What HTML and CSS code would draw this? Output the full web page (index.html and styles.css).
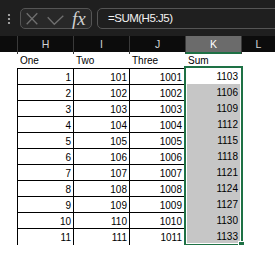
FILE: index.html
```html
<!DOCTYPE html>
<html lang="en">
  <head>
    <meta charset="UTF-8" />
    <meta name="viewport" content="width=device-width, initial-scale=1.0" />
    <title>Sum</title>
    <link rel="stylesheet" href="styles.css">
  </head>
  <body>
    <!-- Formula bar -->
    <div class="toolbar">
      <svg class="grip" width="4" height="12" viewBox="0 0 4 12">
        <circle cx="2" cy="2" r="1.1" />
        <circle cx="2" cy="6" r="1.1" />
        <circle cx="2" cy="10" r="1.1" />
      </svg>
      <div class="fbox">
        <svg class="marks" width="46" height="19" viewBox="0 0 46 19">
          <path d="M5.7 4.3 L16.3 15.3 M16.3 4.3 L5.7 15.3" />
          <path d="M26.7 8.3 L33.3 15.3 L42.3 6.7" />
        </svg>
        <span class="fx">fx</span>
      </div>
      <div class="formula">=SUM(H5:J5)</div>
    </div>

    <!-- Sheet -->
    <div class="sheet">
      <div class="heads">
        <div class="h"></div>
        <div class="h">H</div>
        <div class="h">I</div>
        <div class="h">J</div>
        <div class="h sel">K</div>
        <div class="h">L</div>
      </div>

      <div class="row labels">
        <div></div><div>One</div><div>Two</div><div>Three</div><div>Sum</div><div></div>
      </div>

      <div class="row data first">
        <div></div><div class="t">1</div><div class="t">101</div><div class="t last">1001</div><div class="k active">1103</div><div></div>
      </div>
      <div class="row data">
        <div></div><div class="t">2</div><div class="t">102</div><div class="t last">1002</div><div class="k">1106</div><div></div>
      </div>
      <div class="row data">
        <div></div><div class="t">3</div><div class="t">103</div><div class="t last">1003</div><div class="k">1109</div><div></div>
      </div>
      <div class="row data">
        <div></div><div class="t">4</div><div class="t">104</div><div class="t last">1004</div><div class="k">1112</div><div></div>
      </div>
      <div class="row data">
        <div></div><div class="t">5</div><div class="t">105</div><div class="t last">1005</div><div class="k">1115</div><div></div>
      </div>
      <div class="row data">
        <div></div><div class="t">6</div><div class="t">106</div><div class="t last">1006</div><div class="k">1118</div><div></div>
      </div>
      <div class="row data">
        <div></div><div class="t">7</div><div class="t">107</div><div class="t last">1007</div><div class="k">1121</div><div></div>
      </div>
      <div class="row data">
        <div></div><div class="t">8</div><div class="t">108</div><div class="t last">1008</div><div class="k">1124</div><div></div>
      </div>
      <div class="row data">
        <div></div><div class="t">9</div><div class="t">109</div><div class="t last">1009</div><div class="k">1127</div><div></div>
      </div>
      <div class="row data">
        <div></div><div class="t">10</div><div class="t">110</div><div class="t last">1010</div><div class="k">1130</div><div></div>
      </div>
      <div class="row data end">
        <div></div><div class="t">11</div><div class="t">111</div><div class="t last">1011</div><div class="k">1133</div><div></div>
      </div>

      <!-- selected range K4:K14 -->
      <div class="selection"><span class="handle"></span></div>
    </div>
  </body>
</html>
```

FILE: styles.css
```css
/* Page */
body {
  margin: 0;
  background-color: #fff;
  font-family: "Liberation Sans", Arial, sans-serif;
  overflow: hidden;
}

/* Formula bar */
.toolbar {
  display: flex;
  align-items: flex-start;
  height: 36px;
  padding-top: 8px;
  box-sizing: border-box;
  background-color: #1f1f1f;
  overflow: hidden;
}

.grip {
  margin: 5px 0 0 7px;
  fill: #bdbdbd;
}

.fbox {
  display: flex;
  align-items: center;
  width: 72px;
  height: 21px;
  margin-left: 9px;
  box-sizing: border-box;
  border: 1px solid #555;
  border-radius: 5px;
  background-color: #282828;
}

.marks path {
  fill: none;
  stroke: #6f6f6f;
  stroke-width: 1.3;
}

.fx {
  margin-left: 5px;
  font-family: "Liberation Serif", "Times New Roman", serif;
  font-style: italic;
  font-size: 19px;
  line-height: 19px;
  color: #d0d0d0;
}

.formula {
  flex: 1;
  height: 21px;
  margin: 0 -10px 0 5px;
  padding-left: 10px;
  box-sizing: border-box;
  border: 1px solid #555;
  border-radius: 5px;
  font-size: 11.5px;
  letter-spacing: -0.5px;
  line-height: 19px;
  color: #f2f2f2;
}

/* Sheet */
.sheet {
  position: relative;
}

.heads,
.row {
  display: grid;
  grid-template-columns: 17px 56px 56px 56px 56px 1fr;
}

.heads {
  height: 16px;
  background-color: #0c0c0c;
}

.h {
  box-sizing: border-box;
  border-left: 1px solid #3a3a3a;
  font-size: 10.5px;
  line-height: 16px;
  text-align: center;
  color: #d4d4d4;
}

.h:first-child {
  border-left: none;
}

.h.sel {
  background-color: #6b6b6b;
  border-bottom: 2px solid #1e7145;
  color: #fff;
}

.row {
  height: 16px;
  font-size: 10px;
  line-height: 17px;
  color: #000;
}

.labels div {
  padding-left: 3px;
}

.data .t {
  box-sizing: border-box;
  border-left: 1px solid #000;
  border-top: 1px solid #000;
  padding-right: 2px;
  text-align: right;
}

.data .t.last {
  border-right: 1px solid #000;
}

.data.end {
  height: 17px;
}

.data.end .t {
  border-bottom: 1px solid #000;
}

.k {
  padding-right: 3px;
  text-align: right;
  background-color: #c6c6c6;
}

.k.active {
  background-color: #fff;
}

/* Selection outline */
.selection {
  position: absolute;
  left: 184px;
  top: 30px;
  width: 59px;
  height: 180px;
  box-sizing: border-box;
  border: 2px solid #1e7145;
  box-shadow: inset 0 0 0 1px #fff;
}

.handle {
  position: absolute;
  right: -3px;
  bottom: -3px;
  width: 5px;
  height: 5px;
  background-color: #1e7145;
  box-shadow: -1px -1px 0 #fff;
}
```
